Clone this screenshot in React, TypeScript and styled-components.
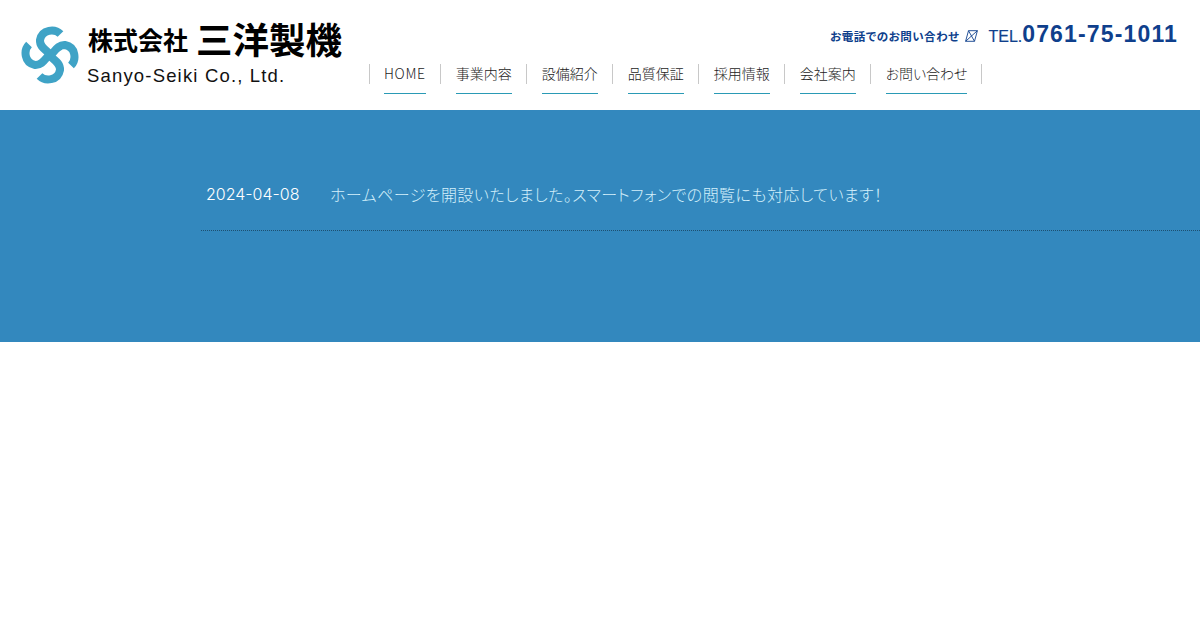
import React from "react";
import styled, { createGlobalStyle } from "styled-components";

const Global = createGlobalStyle`
  html, body { margin: 0; padding: 0; background: #fff; }
  body { font-family: "Noto Sans CJK JP", "Noto Sans", sans-serif; overflow: hidden; font-feature-settings: "palt"; }
`;

const Header = styled.header`
  height: 110px;
  display: flex;
  background: #fff;
`;

const Logo = styled.div`
  width: 369px;
  flex: none;
  box-sizing: border-box;
  padding: 19px 0 0 21px;
  display: flex;
  gap: 8px;
`;

const LogoMark = styled.svg`
  width: 58px;
  height: 60px;
  margin-top: 6px;
  flex: none;
`;

const LogoText = styled.div`
  display: flex;
  flex-direction: column;
`;

const LogoName = styled.div`
  display: flex;
  align-items: center;
  height: 40px;
  padding-left: 1px;
  color: #000;
  font-weight: 700;
  line-height: 40px;
  white-space: nowrap;
  font-feature-settings: normal;
`;

const LogoKind = styled.span`
  font-size: 25px;
  width: 108px;
`;

const LogoCompany = styled.span`
  font-size: 36.5px;
`;

const LogoRoman = styled.div`
  font-family: "Liberation Sans", sans-serif;
  font-size: 18.5px;
  line-height: 22px;
  letter-spacing: 1.17px;
  color: #111;
  margin-top: 6px;
  white-space: nowrap;
`;

const Right = styled.div`
  flex: 1;
  display: flex;
  flex-direction: column;
`;

const Contact = styled.div`
  height: 63px;
  box-sizing: border-box;
  padding: 18px 22px 0 0;
  display: flex;
  justify-content: flex-end;
  align-items: flex-start;
  color: #0f3f8c;
  white-space: nowrap;
`;

const ContactLabel = styled.span`
  font-size: 11.5px;
  font-weight: 700;
  letter-spacing: 0.5px;
  line-height: 36px;
`;

const PhoneIcon = styled.svg`
  width: 13px;
  height: 12px;
  margin: 12px 10px 0 6px;
  flex: none;
`;

const Tel = styled.span`
  font-family: "Liberation Sans", sans-serif;
  font-size: 16px;
  line-height: 32px;
  -webkit-text-stroke: 0.2px #0f3f8c;
`;

const TelNumber = styled.span`
  font-size: 23px;
  font-weight: 700;
  letter-spacing: 1.15px;
  -webkit-text-stroke: 0;
`;

const Nav = styled.nav`
  display: flex;
  align-items: flex-start;
  margin-top: 1px;
`;

const NavItem = styled.a<{ $first?: boolean; $last?: boolean }>`
  display: block;
  height: 20px;
  padding: 0 14px 0 ${(p) => (p.$first ? 14 : 15)}px;
  border-left: 1px solid #c8c8c8;
  border-right: ${(p) => (p.$last ? "1px solid #c8c8c8" : "none")};
  color: #1c1c1c;
  font-size: 14px;
  font-weight: 300;
  line-height: 19px;
  white-space: nowrap;
`;

const NavLabel = styled.span<{ $spacing: number; $proportional?: boolean }>`
  display: block;
  height: 29px;
  border-bottom: 1px solid #2a9ab5;
  letter-spacing: ${(p) => p.$spacing}px;
  font-feature-settings: ${(p) => (p.$proportional ? '"palt"' : "normal")};
`;

const Band = styled.main`
  height: 232px;
  background: #3388be;
  box-sizing: border-box;
  padding: 67px 0 0 201px;
`;

const NewsRow = styled.div`
  height: 54px;
  box-sizing: border-box;
  padding-left: 5px;
  display: flex;
  border-bottom: 1px dotted #1d4f70;
  line-height: 34px;
  white-space: nowrap;
`;

const NewsDate = styled.time`
  width: 124px;
  flex: none;
  color: #fff;
  font-family: "Inter", "Liberation Sans", sans-serif;
  font-size: 16px;
  font-weight: 300;
`;

const NewsTitle = styled.span`
  color: #d4f0fb;
  font-size: 16px;
  font-weight: 300;
  letter-spacing: 0.43px;
`;

const navItems = [
  { label: "HOME", spacing: 0.65, proportional: false },
  { label: "事業内容", spacing: 0, proportional: false },
  { label: "設備紹介", spacing: 0, proportional: false },
  { label: "品質保証", spacing: 0, proportional: false },
  { label: "採用情報", spacing: 0, proportional: false },
  { label: "会社案内", spacing: 0, proportional: false },
  { label: "お問い合わせ", spacing: -0.15, proportional: true },
];

const ARM = "M10.5 -21 C5 -26.5 -8 -26 -10 -15 C-10.5 -8 -4 -5 0.5 -0.5";

export default function App() {
  return (
    <>
      <Global />
      <Header>
        <Logo>
          <LogoMark viewBox="-29 -30 58 60" aria-hidden="true">
            {[0, 90, 180, 270].map((angle) => (
              <path key={angle} d={ARM} transform={`rotate(${angle})`} fill="none" stroke="#3fa3c6" strokeWidth="8" />
            ))}
          </LogoMark>
          <LogoText>
            <LogoName>
              <LogoKind>株式会社</LogoKind>
              <LogoCompany>三洋製機</LogoCompany>
            </LogoName>
            <LogoRoman>Sanyo-Seiki Co., Ltd.</LogoRoman>
          </LogoText>
        </Logo>
        <Right>
          <Contact>
            <ContactLabel>お電話でのお問い合わせ</ContactLabel>
            <PhoneIcon viewBox="0 0 13 12" aria-hidden="true">
              <path d="M3.5 .7H12.4L9.5 11.3H.6Z M3.5 .7L9.5 11.3 M12.4 .7L.6 11.3" fill="none" stroke="#0f3f8c" strokeWidth="0.9" />
            </PhoneIcon>
            <Tel>
              TEL.<TelNumber>0761-75-1011</TelNumber>
            </Tel>
          </Contact>
          <Nav>
            {navItems.map((item, i) => (
              <NavItem key={item.label} $first={i === 0} $last={i === navItems.length - 1}>
                <NavLabel $spacing={item.spacing} $proportional={item.proportional}>{item.label}</NavLabel>
              </NavItem>
            ))}
          </Nav>
        </Right>
      </Header>
      <Band>
        <NewsRow>
          <NewsDate>2024-04-08</NewsDate>
          <NewsTitle>ホームページを開設いたしました。スマートフォンでの閲覧にも対応しています！</NewsTitle>
        </NewsRow>
      </Band>
    </>
  );
}
